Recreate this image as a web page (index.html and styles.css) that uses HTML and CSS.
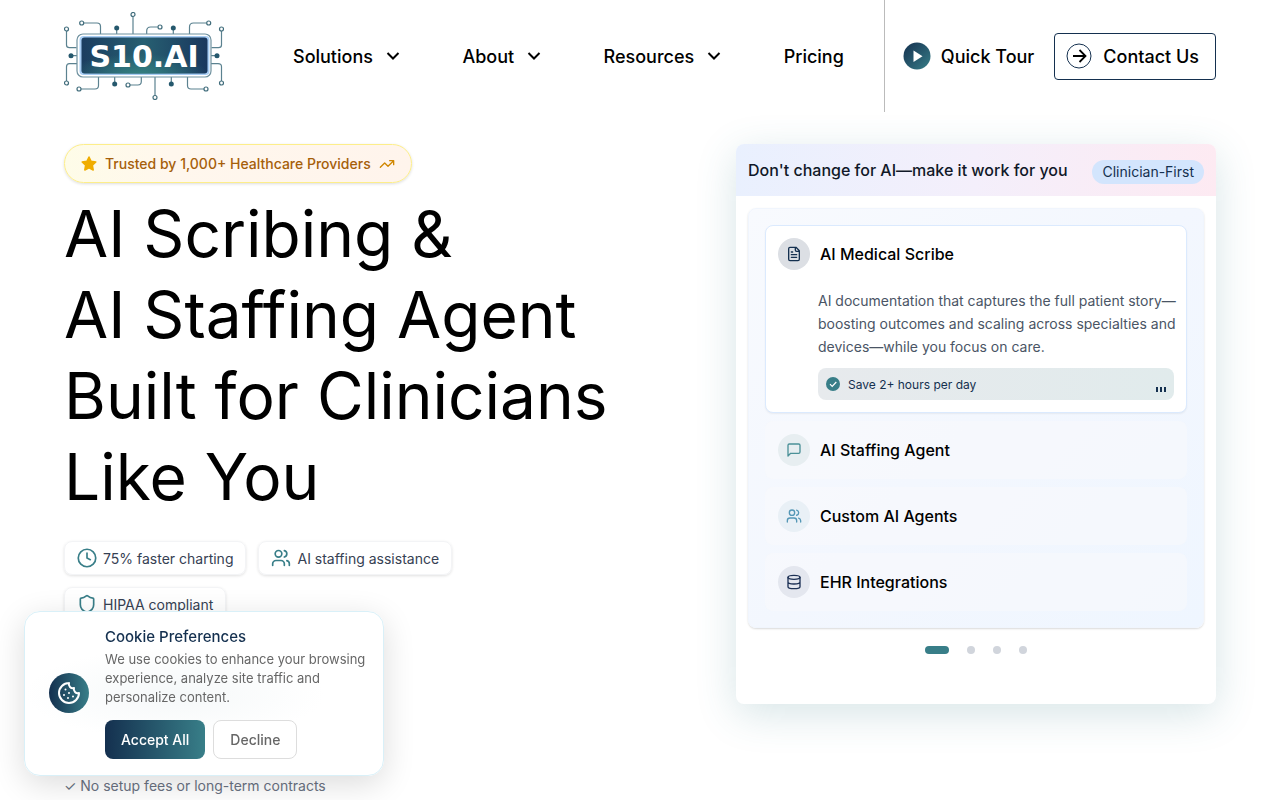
FILE: index.html
```html
<!DOCTYPE html>
<html lang="en">
<head>
<meta charset="utf-8">
<meta name="viewport" content="width=device-width, initial-scale=1">
<title>S10.AI</title>
<link rel="stylesheet" href="styles.css">
</head>
<body>
<svg class="sprite" aria-hidden="true">
  <symbol id="chevron" viewBox="0 0 16 16"><path d="M2.500 5l5.500 5.500L13.500 5" fill="none" stroke="currentColor" stroke-width="2"/></symbol>
  <symbol id="users" viewBox="0 0 24 24"><path d="M16 21v-2a4 4 0 0 0-4-4H6a4 4 0 0 0-4 4v2M22 21v-2a4 4 0 0 0-3-3.870M16 3.130a4 4 0 0 1 0 7.750"/><circle cx="9" cy="7" r="4"/></symbol>
</svg>
<header class="header">
  <a class="logo" href="#" aria-label="S10.AI">
    <svg viewBox="0 0 160 88" width="160" height="88">
      <defs>
        <linearGradient id="lg" x1="0" y1="0" x2="1" y2="0"><stop offset="0" stop-color="#1b3d60"/><stop offset=".5" stop-color="#275f71"/><stop offset="1" stop-color="#19375e"/></linearGradient>
        <radialGradient id="glow" cx=".45" cy="1" r=".55"><stop offset="0" stop-color="#347f80"/><stop offset="1" stop-color="#347f80" stop-opacity="0"/></radialGradient>
      </defs>
      <g fill="none" stroke="#5b8290" stroke-width="1.2">
        <path d="M69 4v18M20 11h13q3.500 0 3.500 3.500V22M52.700 16v6M82.700 22v-3q0-4 4-4h7M109.300 16v6M125.500 22v-7q0-4 4-4h13M2.500 19v14q0 2.700 3 2.700h7M157.500 19v14q0 2.700-3 2.700h-7M7 43.700h6M147 43.700h6M13 51.700H5.500q-3 0-3 3V69M147 51.700h7q3.500 0 3.500 3V69M17 77h14q3.500 0 3.500-3.500V65M50.700 65v6M77.300 65v4.500q0 3.500-3.500 3.500H66M91 65v19M107.300 65v6M123.500 65v8.500q0 3.500 3.500 3.500h13"/>
      </g>
      <g fill="#fff" stroke="#416d7c" stroke-width="1.2"><circle cx="69" cy="2.500" r="2"/><circle cx="17.700" cy="11" r="2"/><circle cx="144.700" cy="11" r="2"/><circle cx="96" cy="15" r="2"/><circle cx="2.500" cy="17" r="2"/><circle cx="157.500" cy="17" r="2"/><circle cx="2.500" cy="71" r="2"/><circle cx="157.500" cy="71" r="2"/><circle cx="15" cy="77" r="2"/><circle cx="142" cy="77" r="2"/><circle cx="64" cy="73" r="2"/><circle cx="91" cy="85.500" r="2"/></g>
      <g fill="#25586d"><circle cx="52.700" cy="16" r="2.500"/><circle cx="109.300" cy="16" r="2.500"/><circle cx="7" cy="43.700" r="2.500"/><circle cx="153" cy="43.700" r="2.500"/><circle cx="50.700" cy="72" r="2.500"/><circle cx="107.300" cy="72" r="2.500"/></g>
      <rect x="13" y="22" width="134" height="43" rx="6" fill="#fff" stroke="#6f919f" stroke-width="1.200"/>
      <rect x="15.500" y="24" width="130" height="39" rx="4" fill="#a7cdf4"/>
      <rect x="17.500" y="25.500" width="126" height="36" rx="3" fill="url(#lg)"/>
      <rect x="17.500" y="25.500" width="126" height="36" rx="3" fill="url(#glow)"/>
      <text class="logo-text" x="80" y="55" text-anchor="middle">S10.AI</text>
    </svg>
  </a>
  <nav class="nav">
    <button class="nav-item">Solutions <svg class="i16"><use href="#chevron"/></svg></button>
    <button class="nav-item">About <svg class="i16"><use href="#chevron"/></svg></button>
    <button class="nav-item">Resources <svg class="i16"><use href="#chevron"/></svg></button>
    <a class="nav-item" href="#">Pricing</a>
  </nav>
  <div class="actions">
    <a class="tour" href="#">
      <svg viewBox="0 0 28 28" width="28" height="28"><defs><linearGradient id="pg" x1="0" y1="0" x2="1" y2="1"><stop offset="0" stop-color="#14304f"/><stop offset="1" stop-color="#387e88"/></linearGradient></defs><circle cx="14" cy="14" r="13.500" fill="url(#pg)"/><path d="M10.500 8.500v11.500l9-5.700z" fill="#fff"/></svg>
      Quick Tour</a>
    <a class="contact" href="#">
      <svg viewBox="0 0 26 26" width="26" height="26" fill="none"><circle cx="13" cy="13" r="12" stroke="#14304f"/><path d="M7 13h12M13.500 7l6 6-6 6" stroke="#000" stroke-width="1.800"/></svg>
      Contact Us</a>
  </div>
</header>

<main class="hero">
  <section class="intro">
    <div class="trusted">
      <svg viewBox="0 0 16 16" width="16" height="16"><path d="M8 1l2.100 4.300 4.700.7-3.400 3.300.8 4.700L8 11.800 3.800 14l.8-4.700L1.200 6l4.700-.7z" fill="#f0ad00" stroke="#f0ad00" stroke-width="1.500" stroke-linejoin="round"/></svg>
      <span>Trusted by 1,000+ Healthcare Providers</span>
      <svg class="line trend" viewBox="0 0 24 24" width="16" height="16"><path d="M22 7l-8.500 8.500-5-5L2 17M16 7h6v6"/></svg>
    </div>
    <h1 class="title">AI Scribing &amp;<br>AI Staffing Agent<br>Built for Clinicians<br>Like You</h1>
    <ul class="chips">
      <li class="chip"><svg class="line" viewBox="0 0 24 24" width="20" height="20"><circle cx="12" cy="12" r="10.500"/><path d="M12 6v6l4 2"/></svg>75% faster charting</li>
      <li class="chip"><svg class="line" width="20" height="20"><use href="#users"/></svg>AI staffing assistance</li>
      <li class="chip"><svg class="line" viewBox="0 0 24 24" width="20" height="20"><path d="M20 13c0 5-3.500 7.500-7.660 8.950a1 1 0 0 1-.67-.01C7.500 20.500 4 18 4 13V6a1 1 0 0 1 1-1c2 0 4.500-1.200 6.240-2.720a1.170 1.170 0 0 1 1.520 0C14.510 3.810 17 5 19 5a1 1 0 0 1 1 1z"/></svg>HIPAA compliant</li>
    </ul>
    <p class="note">✓ No setup fees or long-term contracts</p>
  </section>

  <section class="card">
    <div class="card-head"><h2 class="card-title">Don't change for AI—make it work for you</h2><span class="pill">Clinician-First</span></div>
    <div class="card-body">
      <div class="panel">
        <article class="item active">
          <div class="item-head"><span class="disc navy"><svg class="line" viewBox="0 0 24 24" width="16" height="16"><path d="M15 2H6a2 2 0 0 0-2 2v16a2 2 0 0 0 2 2h12a2 2 0 0 0 2-2V7zM14 2v4a2 2 0 0 0 2 2h4M10 9H8M16 13H8M16 17H8"/></svg></span><h3 class="item-title">AI Medical Scribe</h3></div>
          <div class="detail">
            <p class="text">AI documentation that captures the full patient story—boosting outcomes and scaling across specialties and devices—while you focus on care.</p>
            <div class="save"><svg viewBox="0 0 14 14" width="14" height="14"><circle cx="7" cy="7" r="7" fill="#387e88"/><path d="M4 7.200l2.200 2.200L10.300 5" fill="none" stroke="#fff" stroke-width="1.200"/></svg>Save 2+ hours per day<span class="bars"><i></i><i></i><i></i></span></div>
          </div>
        </article>
        <article class="item"><div class="item-head"><span class="disc teal"><svg class="line" viewBox="0 0 24 24" width="16" height="16"><path d="M21 15a2 2 0 0 1-2 2H7l-4 4V5a2 2 0 0 1 2-2h14a2 2 0 0 1 2 2z"/></svg></span><h3 class="item-title">AI Staffing Agent</h3></div></article>
        <article class="item"><div class="item-head"><span class="disc sky"><svg class="line" width="16" height="16"><use href="#users"/></svg></span><h3 class="item-title">Custom AI Agents</h3></div></article>
        <article class="item"><div class="item-head"><span class="disc indigo"><svg class="line" viewBox="0 0 24 24" width="16" height="16"><ellipse cx="12" cy="5" rx="9" ry="3"/><path d="M3 5v14a9 3 0 0 0 18 0V5M3 12a9 3 0 0 0 18 0"/></svg></span><h3 class="item-title">EHR Integrations</h3></div></article>
      </div>
      <div class="dots"><button class="dot on" aria-label="Slide 1"></button><button class="dot" aria-label="Slide 2"></button><button class="dot" aria-label="Slide 3"></button><button class="dot" aria-label="Slide 4"></button></div>
    </div>
  </section>
</main>

<aside class="cookie" aria-label="Cookie Preferences">
  <span class="cookie-icon"><svg class="line" viewBox="0 0 24 24" width="24" height="24"><path d="M12 2a10 10 0 1 0 10 10 4 4 0 0 1-5-5 4 4 0 0 1-5-5M8.500 8.500v.01M16 15.500v.01M12 12v.01M11 17v.01M7 14v.01"/></svg></span>
  <div>
    <h2 class="cookie-title">Cookie Preferences</h2>
    <p class="cookie-text">We use cookies to enhance your browsing experience, analyze site traffic and personalize content.</p>
    <div class="cookie-actions"><button class="btn accept">Accept All</button><button class="btn decline">Decline</button></div>
  </div>
</aside>
</body>
</html>
```

FILE: styles.css
```css
* { box-sizing: border-box; margin: 0; padding: 0; }
body { font-family: Inter, "Liberation Sans", sans-serif; color: #000; background: #fff; overflow: hidden; }
button { font: inherit; color: inherit; background: none; border: 0; cursor: pointer; }
a { color: inherit; text-decoration: none; }
svg { display: block; flex: none; }
.sprite { position: absolute; width: 0; height: 0; }
.line { fill: none; stroke: currentColor; stroke-width: 2; stroke-linecap: round; stroke-linejoin: round; }
.i16 { width: 16px; height: 16px; }

.header { display: flex; align-items: center; height: 112px; padding: 0 64px; font-size: 18px; font-weight: 500; }
.logo-text { font: bold 30px "DejaVu Sans", sans-serif; fill: #fff; }
.nav { flex: 1; display: flex; align-items: center; justify-content: space-between; padding: 0 40px 0 69px; }
.nav-item { display: flex; align-items: center; gap: 12px; white-space: nowrap; }
.actions { display: flex; align-items: center; align-self: stretch; gap: 20px; padding-left: 18px; border-left: 1px solid #bbb; white-space: nowrap; }
.tour { display: flex; align-items: center; gap: 10px; }
.contact { display: flex; align-items: center; gap: 11px; height: 47px; padding: 0 16px 0 11px; border: 1px solid #14304f; border-radius: 4px; }

.hero { display: grid; grid-template-columns: 1fr 480px; gap: 96px; align-items: start; padding: 32px 64px; }
.intro { display: flex; flex-direction: column; align-items: flex-start; }
.trusted { display: flex; align-items: center; gap: 8px; height: 39px; padding: 0 16px; border: 1px solid #fdee8a; border-radius: 20px; background: linear-gradient(90deg, #fefce8, #fff7ed 30%, #fff4ec); color: #a65f0a; font-size: 14px; font-weight: 500; box-shadow: 0 1px 3px rgba(0,0,0,.14); }
.trend { color: #d08700; }
.title { margin-top: 10px; font-size: 64px; font-weight: 400; line-height: 81px; white-space: nowrap; }
.chips { display: flex; flex-wrap: wrap; gap: 12px; margin-top: 24px; padding-right: 160px; list-style: none; }
.chip { display: flex; align-items: center; gap: 6px; height: 34px; padding: 0 12px; border: 1px solid #f3f4f6; border-radius: 8px; color: #364153; font-size: 14px; box-shadow: 0 1px 3px rgba(0,0,0,.12); }
.chip svg { color: #387e88; }
.note { margin-top: 155px; color: #6a7282; font-size: 14px; line-height: 20px; }

.card { min-height: 560px; border-radius: 8px; background: #fff; overflow: hidden; box-shadow: 0 10px 40px rgba(56,126,136,.2); }
.card-head { display: flex; align-items: center; justify-content: space-between; height: 52px; padding: 0 12px; background: linear-gradient(90deg, #e9f0fe, #f4effb 50%, #fdeaf2); }
.card-title { color: #101828; font-size: 16px; font-weight: 500; }
.pill { margin-top: 4px; padding: 0 10px; border-radius: 12px; background: #d3e5fd; color: #14304f; font-size: 14px; line-height: 24px; }
.card-body { padding: 12px; }
.panel { display: grid; gap: 8px; padding: 16px; border: 1px solid #f0f5fd; border-radius: 8px; background: linear-gradient(135deg, #f8fafe, #f3f7fe 50%, #eff6ff); box-shadow: 0 1px 2px rgba(0,0,0,.15); }
.item { padding: 13px; border-radius: 8px; background: rgba(249,250,251,.5); }
.active { padding: 12px; border: 1px solid #dbeafe; background: #fff; box-shadow: 0 1px 2px rgba(0,0,0,.06); }
.item-head { display: flex; align-items: center; gap: 10px; }
.disc { display: grid; place-items: center; width: 32px; height: 32px; border-radius: 50%; }
.navy { color: #14304f; background: #dcdfe4; }
.teal { color: #4b9198; background: #e7eef1; }
.sky { color: #5597b6; background: #e9f0f6; }
.indigo { color: #1d3155; background: #e4e7ef; }
.item-title { font-size: 16px; font-weight: 500; }
.detail { padding: 19px 0 0 40px; }
.text { margin-right: -8px; color: #4a5565; font-size: 14px; line-height: 23px; }
.save { display: flex; align-items: center; gap: 8px; height: 32px; margin-top: 10px; padding: 0 8px; border-radius: 8px; background: linear-gradient(90deg, #e7eaed, #e1ebec); color: #14304f; font-size: 12px; }
.bars { display: flex; gap: 2px; margin: 11px 0 0 auto; }
.bars i { width: 2px; height: 5px; background: #14304f; }
.dots { display: flex; justify-content: center; gap: 18px; padding-top: 18px; }
.dot { width: 8px; height: 8px; border-radius: 4px; background: #d1d5dc; }
.on { width: 24px; background: #387e88; }

.cookie { position: fixed; left: 24px; bottom: 24px; display: flex; align-items: center; gap: 16px; width: 360px; padding: 15px 24px 16px; border: 1px solid #d9f0f8; border-radius: 16px; background: radial-gradient(ellipse 150px 46px at 150px 82px, #f5f8f9, #fff); box-shadow: 0 8px 32px rgba(0,0,0,.14); }
.cookie-icon { display: grid; flex: none; place-items: center; width: 40px; height: 40px; border-radius: 50%; background: linear-gradient(90deg, #14304f, #387e88); color: #fff; }
.cookie-title { color: #14304f; font-size: 15px; font-weight: 500; line-height: 20px; }
.cookie-text { margin: 3px -16px 13px 0; color: #666; font-size: 13px; line-height: 19px; }
.cookie-actions { display: flex; gap: 8px; }
.btn { height: 39px; padding: 0 16px; border-radius: 8px; font-size: 14px; font-weight: 500; }
.accept { background: linear-gradient(90deg, #14304f, #387e88); color: #fff; }
.decline { border: 1px solid #ddd; background: #fff; color: #666; }
```
